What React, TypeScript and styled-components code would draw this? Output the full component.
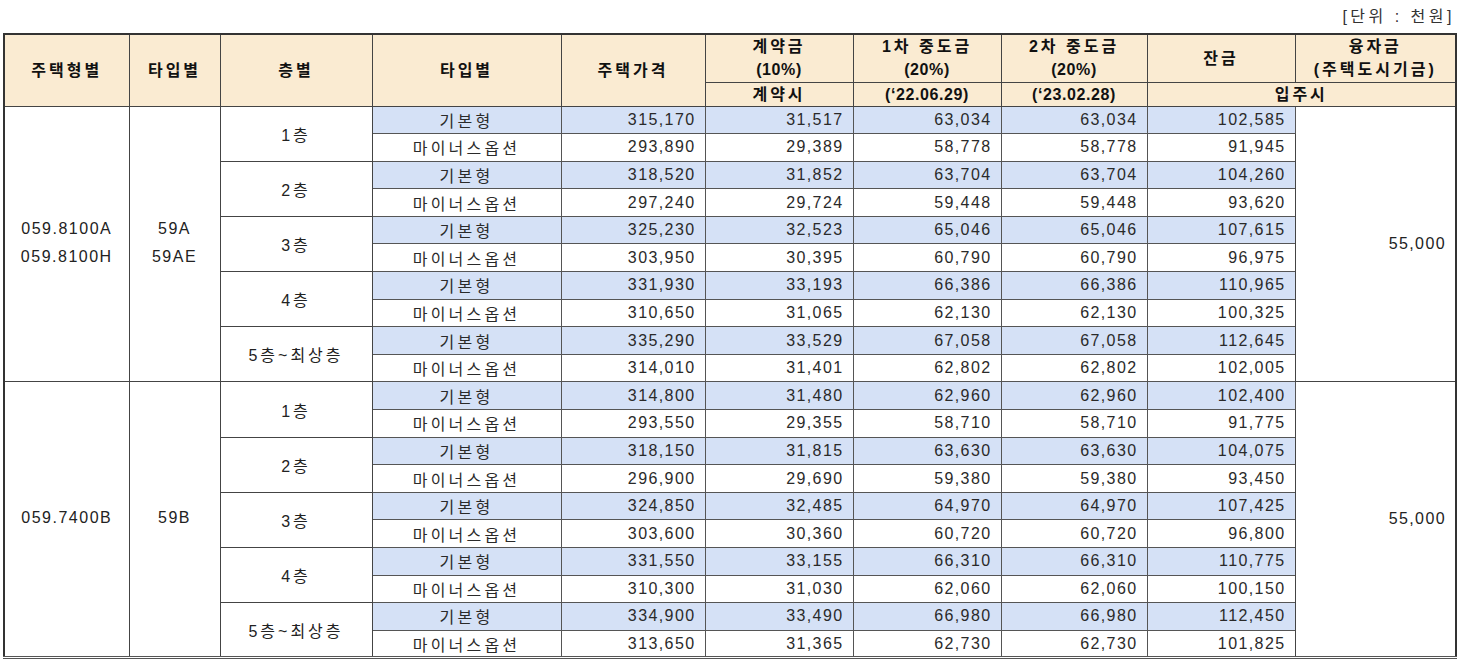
import React from 'react';
import styled, { createGlobalStyle } from 'styled-components';

const GlobalStyle = createGlobalStyle`
  html, body {
    margin: 0;
    padding: 0;
    background: #ffffff;
  }
  body {
    font-family: "Liberation Sans", "Noto Sans CJK KR", sans-serif;
    color: #222;
  }
`;

const Page = styled.div`
  width: 1463px;
  height: 663px;
  overflow: hidden;
  padding-left: 3px;
  box-sizing: border-box;
`;

const Unit = styled.div`
  width: 1452px;
  height: 33px;
  display: flex;
  align-items: center;
  justify-content: flex-end;
  padding-bottom: 4px;
  box-sizing: border-box;
  font-size: 16px;
  letter-spacing: 3.5px;
  white-space: pre;
  color: #333;
`;

const Table = styled.table`
  width: 1452px;
  table-layout: fixed;
  border-collapse: collapse;
  border: 2px solid #333;
  border-bottom: 3px double #555;
  font-size: 16px;
`;

const HeadRow = styled.tr<{ $h: number }>`
  height: ${p => p.$h}px;
`;

const BodyRow = styled.tr`
  height: 27.6px;
`;

const HeadCell = styled.th`
  background: #faebd2;
  border: 1px solid #444;
  font-weight: 700;
  color: #111;
  letter-spacing: 3px;
  line-height: 23px;
  padding: 0;
  text-align: center;
  vertical-align: middle;
`;

const Latin = styled.span`
  letter-spacing: 0.6px;
`;

const GroupCell = styled.td`
  border: 1px solid #444;
  text-align: center;
  vertical-align: middle;
  line-height: 28px;
  letter-spacing: 1.5px;
  padding: 0 0 2px;
`;

const FloorCell = styled.td`
  border: 1px solid #444;
  text-align: center;
  vertical-align: middle;
  letter-spacing: 3px;
  padding: 0;
`;

const TypeCell = styled.td<{ $shade: boolean }>`
  border: 1px solid #555;
  background: ${p => (p.$shade ? '#d5e1f6' : '#ffffff')};
  text-align: center;
  vertical-align: middle;
  letter-spacing: 3.2px;
  padding: 0;
  color: #2a2a2a;
`;

const NumCell = styled.td<{ $shade: boolean }>`
  border: 1px solid #555;
  background: ${p => (p.$shade ? '#d5e1f6' : '#ffffff')};
  text-align: right;
  vertical-align: middle;
  letter-spacing: 1.4px;
  padding: 0 9px 0 0;
  color: #2a2a2a;
`;

const LoanCell = styled.td`
  border: 1px solid #444;
  text-align: right;
  vertical-align: middle;
  letter-spacing: 1.4px;
  padding: 0 9px 0 0;
`;

type Pair = [number[], number[]];

const floors = ['1층', '2층', '3층', '4층', '5층~최상층'];

const groupA: Pair[] = [
  [[315170, 31517, 63034, 63034, 102585], [293890, 29389, 58778, 58778, 91945]],
  [[318520, 31852, 63704, 63704, 104260], [297240, 29724, 59448, 59448, 93620]],
  [[325230, 32523, 65046, 65046, 107615], [303950, 30395, 60790, 60790, 96975]],
  [[331930, 33193, 66386, 66386, 110965], [310650, 31065, 62130, 62130, 100325]],
  [[335290, 33529, 67058, 67058, 112645], [314010, 31401, 62802, 62802, 102005]],
];

const groupB: Pair[] = [
  [[314800, 31480, 62960, 62960, 102400], [293550, 29355, 58710, 58710, 91775]],
  [[318150, 31815, 63630, 63630, 104075], [296900, 29690, 59380, 59380, 93450]],
  [[324850, 32485, 64970, 64970, 107425], [303600, 30360, 60720, 60720, 96800]],
  [[331550, 33155, 66310, 66310, 110775], [310300, 31030, 62060, 62060, 100150]],
  [[334900, 33490, 66980, 66980, 112450], [313650, 31365, 62730, 62730, 101825]],
];

const groups = [
  { codes: ['059.8100A', '059.8100H'], types: ['59A', '59AE'], rows: groupA, loan: 55000 },
  { codes: ['059.7400B'], types: ['59B'], rows: groupB, loan: 55000 },
];

const widths = [125, 91, 152, 189, 144, 148, 148, 146, 148, 161];

const fmt = (n: number) => n.toLocaleString('en-US');

const Lines: React.FC<{ items: string[] }> = ({ items }) => (
  <>
    {items.map((t, i) => (
      <div key={i}>{t}</div>
    ))}
  </>
);

const App: React.FC = () => (
  <>
    <GlobalStyle />
    <Page>
      <Unit>{'[단위 : 천원]'}</Unit>
      <Table>
        <colgroup>
          {widths.map((w, i) => (
            <col key={i} style={{ width: w }} />
          ))}
        </colgroup>
        <thead>
          <HeadRow $h={48}>
            <HeadCell rowSpan={2}>주택형별</HeadCell>
            <HeadCell rowSpan={2}>타입별</HeadCell>
            <HeadCell rowSpan={2}>층별</HeadCell>
            <HeadCell rowSpan={2}>타입별</HeadCell>
            <HeadCell rowSpan={2}>주택가격</HeadCell>
            <HeadCell>
              계약금<br />
              <Latin>(10%)</Latin>
            </HeadCell>
            <HeadCell>
              1차 중도금<br />
              <Latin>(20%)</Latin>
            </HeadCell>
            <HeadCell>
              2차 중도금<br />
              <Latin>(20%)</Latin>
            </HeadCell>
            <HeadCell>잔금</HeadCell>
            <HeadCell>
              융자금<br />
              (주택도시기금)
            </HeadCell>
          </HeadRow>
          <HeadRow $h={24}>
            <HeadCell>계약시</HeadCell>
            <HeadCell>
              <Latin>(‘22.06.29)</Latin>
            </HeadCell>
            <HeadCell>
              <Latin>(‘23.02.28)</Latin>
            </HeadCell>
            <HeadCell colSpan={2}>입주시</HeadCell>
          </HeadRow>
        </thead>
        <tbody>
          {groups.map((g, gi) =>
            g.rows.map((pair, fi) =>
              pair.map((vals, ri) => {
                const first = fi === 0 && ri === 0;
                const shade = ri === 0;
                return (
                  <BodyRow key={`${gi}-${fi}-${ri}`}>
                    {first && (
                      <GroupCell rowSpan={10}>
                        <Lines items={g.codes} />
                      </GroupCell>
                    )}
                    {first && (
                      <GroupCell rowSpan={10}>
                        <Lines items={g.types} />
                      </GroupCell>
                    )}
                    {ri === 0 && <FloorCell rowSpan={2}>{floors[fi]}</FloorCell>}
                    <TypeCell $shade={shade}>{shade ? '기본형' : '마이너스옵션'}</TypeCell>
                    {vals.map((v, vi) => (
                      <NumCell key={vi} $shade={shade}>
                        {fmt(v)}
                      </NumCell>
                    ))}
                    {first && <LoanCell rowSpan={10}>{fmt(g.loan)}</LoanCell>}
                  </BodyRow>
                );
              })
            )
          )}
        </tbody>
      </Table>
    </Page>
  </>
);

export default App;
